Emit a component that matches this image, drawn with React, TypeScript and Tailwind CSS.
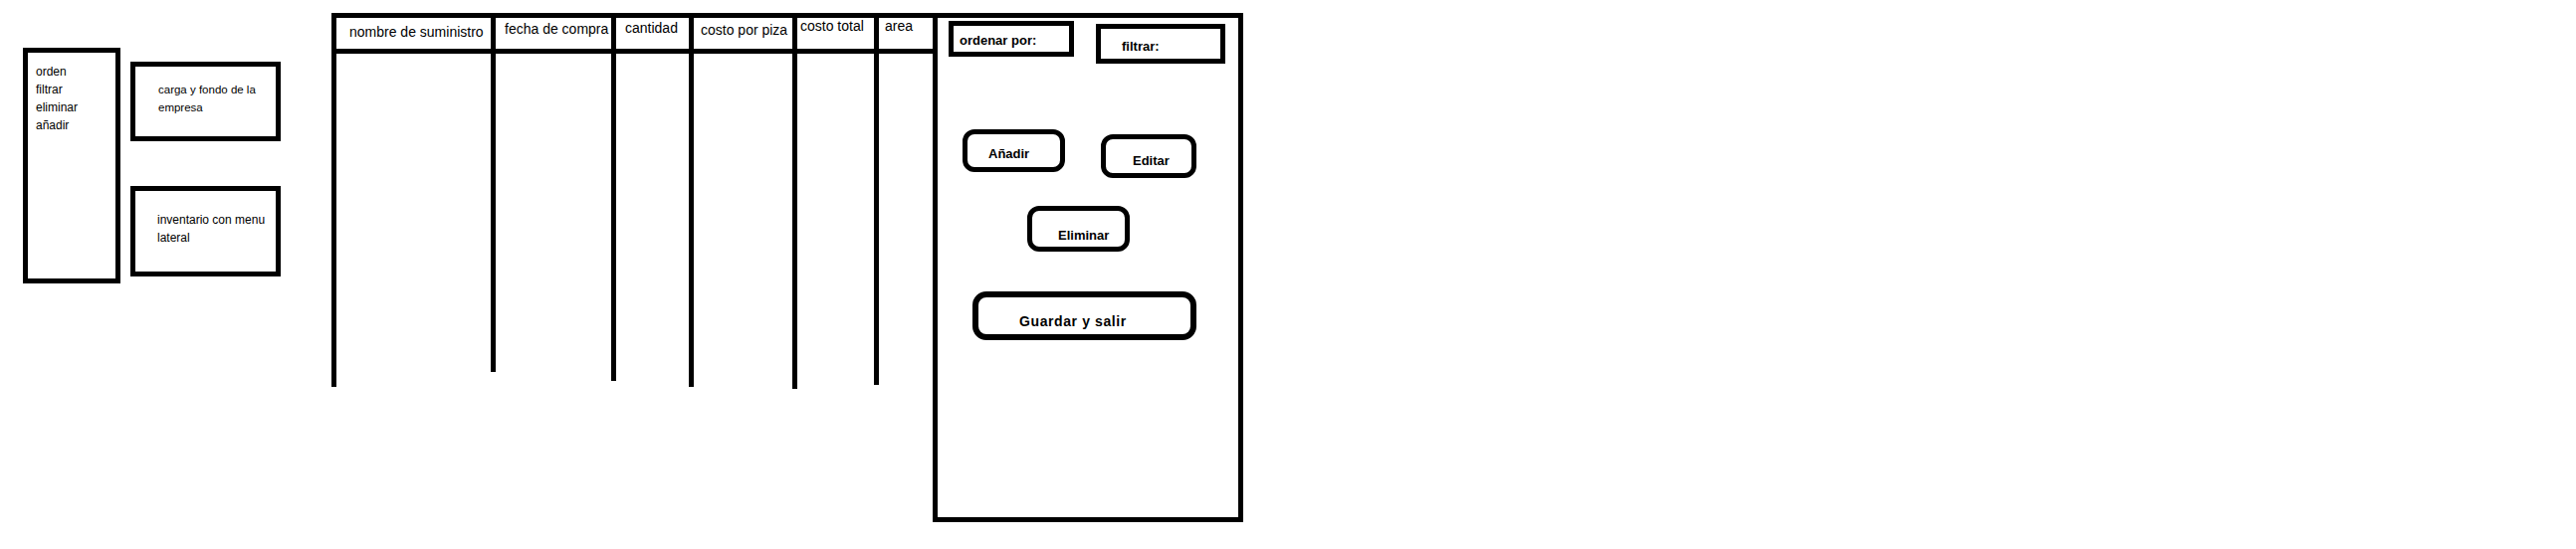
const menuItems = ['orden', 'filtrar', 'eliminar', 'añadir'];

type Column = {
  label: string;
  width: string;
  height: string;
  pad: string;
};

const columns: Column[] = [
  { label: 'nombre de suministro', width: 'w-[160px]', height: 'h-[376px]', pad: 'pl-[13px] pt-[6px]' },
  { label: 'fecha de compra', width: 'w-[121px]', height: 'h-[361px]', pad: 'pl-[9px] pt-[3px]' },
  { label: 'cantidad', width: 'w-[78px]', height: 'h-[370px]', pad: 'pl-[9px] pt-[2px]' },
  { label: 'costo por piza', width: 'w-[104px]', height: 'h-[376px]', pad: 'pl-[7px] pt-[4px]' },
  { label: 'costo total', width: 'w-[82px]', height: 'h-[378px]', pad: 'pl-[3px] pt-0' },
  { label: 'area', width: 'w-[59px]', height: 'h-[374px]', pad: 'pl-[6px] pt-0' },
];

export default function App() {
  return (
    <div className="flex h-[552px] w-[2588px] items-start bg-white font-['Liberation_Sans',Arial,sans-serif] text-black">
      {/* Menu lateral */}
      <div className="ml-[23px] mt-[48px] h-[237px] w-[98px] border-[5px] border-black pl-[8px] pt-[10px] text-[12px] leading-[18px]">
        {menuItems.map((item) => (
          <div key={item}>{item}</div>
        ))}
      </div>

      {/* Notas */}
      <div className="ml-[10px] mt-[62px] flex w-[151px] flex-col gap-[45px]">
        <div className="h-[80px] border-[5px] border-black pl-[23px] pt-[14px] text-[11.5px] leading-[18px]">
          carga y fondo de la
          <br />
          empresa
        </div>
        <div className="h-[91px] border-[5px] border-black pl-[22px] pt-[20px] text-[12px] leading-[18px]">
          inventario con menu
          <br />
          lateral
        </div>
      </div>

      {/* Tabla de inventario */}
      <div className="ml-[51px] mt-[13px] flex items-start">
        {columns.map((col) => (
          <div key={col.label} className={`${col.width} ${col.height} flex flex-col border-l-[5px] border-black`}>
            <div
              className={`h-[41px] whitespace-nowrap border-y-[5px] border-black text-[14px] leading-[16px] ${col.pad}`}
            >
              {col.label}
            </div>
          </div>
        ))}
      </div>

      {/* Panel de acciones */}
      <div className="mt-[13px] flex h-[512px] w-[312px] flex-col border-[5px] border-black text-[13px] font-bold leading-[16px]">
        <div className="ml-[11px] mt-[3px] flex items-start gap-[22px]">
          <div className="h-[36px] w-[126px] border-[5px] border-black pl-[6px] pt-[7px]">ordenar por:</div>
          <div className="mt-[3px] h-[40px] w-[130px] border-[5px] border-black pl-[21px] pt-[10px]">filtrar:</div>
        </div>

        <div className="ml-[25px] mt-[66px] flex items-start">
          <button className="h-[43px] w-[103px] rounded-[12px] border-[5px] border-black pl-[21px] pt-[7px] text-left">
            Añadir
          </button>
          <button className="ml-[36px] mt-[5px] h-[44px] w-[96px] rounded-[12px] border-[5px] border-black pl-[27px] pt-[9px] text-left">
            Editar
          </button>
        </div>

        <button className="ml-[90px] mt-[28px] h-[46px] w-[103px] rounded-[12px] border-[5px] border-black pl-[26px] pt-[13px] text-left">
          Eliminar
        </button>

        <button className="ml-[35px] mt-[40px] h-[49px] w-[225px] rounded-[14px] border-[6px] border-black pl-[41px] pt-[10px] text-left text-[14px] tracking-[0.6px]">
          Guardar y salir
        </button>
      </div>
    </div>
  );
}
